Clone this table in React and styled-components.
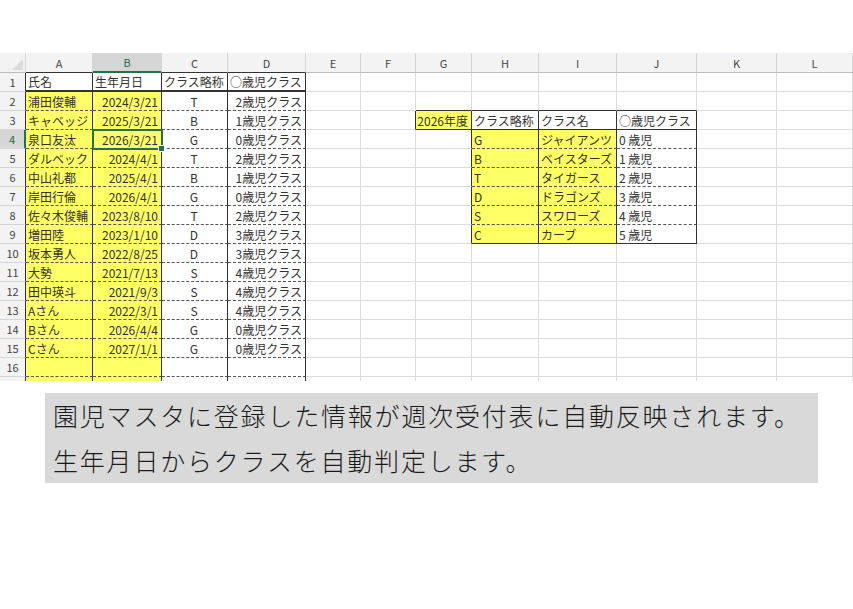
import React from "react"
import styled, { createGlobalStyle } from "styled-components"

const GlobalStyle = createGlobalStyle`
	html, body {
		margin: 0;
		padding: 0;
		background: #ffffff;
	}
	body {
		font-family: "Noto Sans CJK JP", "Noto Sans", sans-serif;
		color: #222222;
	}
`

const COLS = ["A", "B", "C", "D", "E", "F", "G", "H", "I", "J", "K", "L"]
const YELLOW = "#ffff66"

const Borders = {
	grid: "1px solid #dcdcdc",
	solid: "1px solid #333333",
	thick: "2px solid #333333",
	dash: "1px dashed #555555",
}

const people = [
	["浦田俊輔", "2024/3/21", "T", "2歳児クラス"],
	["キャベッジ", "2025/3/21", "B", "1歳児クラス"],
	["泉口友汰", "2026/3/21", "G", "0歳児クラス"],
	["ダルベック", "2024/4/1", "T", "2歳児クラス"],
	["中山礼都", "2025/4/1", "B", "1歳児クラス"],
	["岸田行倫", "2026/4/1", "G", "0歳児クラス"],
	["佐々木俊輔", "2023/8/10", "T", "2歳児クラス"],
	["増田陸", "2023/1/10", "D", "3歳児クラス"],
	["坂本勇人", "2022/8/25", "D", "3歳児クラス"],
	["大勢", "2021/7/13", "S", "4歳児クラス"],
	["田中瑛斗", "2021/9/3", "S", "4歳児クラス"],
	["Aさん", "2022/3/1", "S", "4歳児クラス"],
	["Bさん", "2026/4/4", "G", "0歳児クラス"],
	["Cさん", "2027/1/1", "G", "0歳児クラス"],
	["", "", "", ""],
	["", "", "", ""],
]

const classes = [
	["G", "ジャイアンツ", "0 歳児"],
	["B", "ベイスターズ", "1 歳児"],
	["T", "タイガース", "2 歳児"],
	["D", "ドラゴンズ", "3 歳児"],
	["S", "スワローズ", "4 歳児"],
	["C", "カーブ", "5 歳児"],
]

const Page = styled.div`
	width: 853px;
	height: 609px;
	padding-top: 53px;
	box-sizing: border-box;
	overflow: hidden;
	background: #ffffff;
`

const Sheet = styled.div`
	display: grid;
	grid-template-columns: 26px 67px 69px 66px 78px 55px 55px 56px 67px 78px 80px 80px 1fr;
	grid-template-rows: 20px;
	grid-auto-rows: 19px;
	height: 328px;
	overflow: hidden;
`

const Corner = styled.div`
	position: relative;
	background: #f3f3f3;
	border-right: 1px solid #d6d6d6;
	border-bottom: 1px solid #bdbdbd;
	box-sizing: border-box;

	&::after {
		content: "";
		position: absolute;
		right: 2px;
		bottom: 2px;
		border-left: 11px solid transparent;
		border-bottom: 11px solid #dcdcdc;
	}
`

const ColHead = styled.div`
	display: flex;
	align-items: center;
	justify-content: center;
	box-sizing: border-box;
	font-family: "Noto Sans CJK JP", sans-serif;
	font-size: 11px;
	background: ${p => p.$active ? "#d6d6d6" : "#f3f3f3"};
	color: ${p => p.$active ? "#1e6b3f" : "#444444"};
	border-right: 1px solid #d6d6d6;
	border-bottom: ${p => p.$active ? "2px solid #217346" : p.$dark ? "1px solid #333333" : "1px solid #bdbdbd"};
`

const RowHead = styled.div`
	display: flex;
	align-items: center;
	justify-content: center;
	box-sizing: border-box;
	font-size: 11px;
	background: ${p => p.$active ? "#d6d6d6" : "#f3f3f3"};
	color: ${p => p.$active ? "#1e6b3f" : "#444444"};
	border-right: ${p => p.$active ? "2px solid #217346" : p.$dark ? "1px solid #333333" : "1px solid #bdbdbd"};
	border-bottom: 1px solid #d6d6d6;
`

const Cell = styled.div`
	position: relative;
	display: flex;
	align-items: center;
	justify-content: ${p => p.$align === "right" ? "flex-end" : p.$align === "center" ? "center" : "flex-start"};
	box-sizing: border-box;
	padding: 0 3px 0 2px;
	font-size: 12px;
	white-space: nowrap;
	overflow: hidden;
	color: #333333;
	background: ${p => p.$fill || "#ffffff"};
	border-right: ${p => Borders[p.$r || "grid"]};
	border-bottom: ${p => Borders[p.$b || "grid"]};
	${p => p.$sel && `
		overflow: visible;
		outline: 2px solid #217346;
		outline-offset: -1px;
		z-index: 1;
		&::after {
			content: "";
			position: absolute;
			right: -4px;
			bottom: -4px;
			width: 5px;
			height: 5px;
			background: #217346;
			border: 1px solid #ffffff;
		}
	`}
`

const Caption = styled.div`
	margin: 12px 0 0 45px;
	width: 773px;
	height: 90px;
	box-sizing: border-box;
	padding-left: 8px;
	background: #d9d9d9;
	font-family: "Noto Sans CJK JP", sans-serif;
	font-size: 25px;
	font-weight: 300;
	line-height: 45px;
	letter-spacing: 1.8px;
	color: #1a1a1a;
	white-space: nowrap;
`

// spec for one cell of the sheet, row is 1-based like Excel, c is column index
const cellSpec = (row, c) => {
	const s = {}

	// left table A1:D17
	if (c <= 3) {
		s.r = "solid"
		s.b = row === 1 ? "thick" : "dash"
		if (row === 1) {
			s.text = ["氏名", "生年月日", "クラス略称", "○歳児クラス"][c]
			s.align = c === 2 ? "center" : "left"
		} else {
			s.text = people[row - 2][c]
			s.align = ["left", "right", "center", "right"][c]
			if (c <= 1) s.fill = YELLOW
		}
		if (row === 4 && c === 1) s.sel = true
		return s
	}

	// right table G3:J9
	if (c === 5 && row === 3) s.r = "solid"
	if (row === 2 && c >= 6 && c <= 9) s.b = "solid"
	if (c === 6) {
		if (row === 3) {
			s.text = "2026年度"
			s.fill = YELLOW
			s.align = "right"
			s.r = "solid"
			s.b = "solid"
		}
		if (row >= 4 && row <= 9) s.r = "solid"
	}
	if (c >= 7 && c <= 9) {
		if (row === 3) {
			s.text = ["クラス略称", "クラス名", "○歳児クラス"][c - 7]
			s.r = "solid"
			s.b = "solid"
		}
		if (row >= 4 && row <= 9) {
			s.text = classes[row - 4][c - 7]
			s.r = "solid"
			s.b = row === 9 ? "solid" : "dash"
			if (c <= 8) s.fill = YELLOW
		}
	}
	return s
}

const rows = Array.from({ length: 17 }, (_, i) => i + 1)

const App = () => {
	return (
		<>
			<GlobalStyle />
			<Page>
				<Sheet>
					<Corner />
					{COLS.map((col, c) => (
						<ColHead key={col} $active={col === "B"} $dark={c <= 3}>{col}</ColHead>
					))}
					{rows.map(row => (
						<React.Fragment key={row}>
							<RowHead $active={row === 4} $dark={true}>{row}</RowHead>
							{COLS.map((col, c) => {
								const s = cellSpec(row, c)
								return (
									<Cell
										key={col}
										$fill={s.fill}
										$align={s.align}
										$r={s.r}
										$b={s.b}
										$sel={s.sel}
									>
										{s.text}
									</Cell>
								)
							})}
						</React.Fragment>
					))}
				</Sheet>
				<Caption>
					園児マスタに登録した情報が週次受付表に自動反映されます。
					<br />
					生年月日からクラスを自動判定します。
				</Caption>
			</Page>
		</>
	)
}

export default App
